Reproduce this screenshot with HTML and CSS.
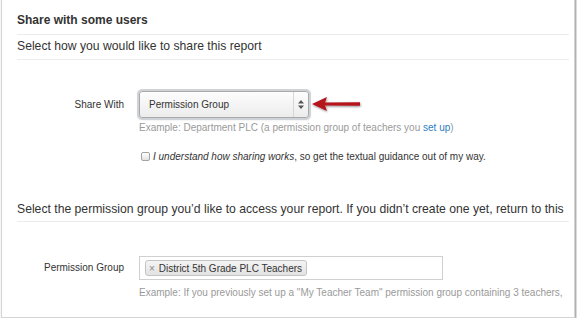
FILE: index.html
```html
<!DOCTYPE html>
<html lang="en">
<head>
    <meta charset="UTF-8">
    <title>Share report</title>
    <link rel="stylesheet" href="styles.css">
</head>
<body>
    <div class="panel">
        <h4 class="panel-title">Share with some users</h4>
        <p class="section-title">Select how you would like to share this report</p>

        <div class="form-row share-row">
            <label class="row-label">Share With</label>
            <div class="row-field">
                <div class="select-line">
                    <div class="fake-select">
                        <span class="select-value">Permission Group</span>
                        <span class="select-arrows">
                            <svg width="6" height="9" viewBox="0 0 6 9">
                                <path d="M3 0 L6 3.5 L0 3.5 Z M0 5.5 L6 5.5 L3 9 Z" fill="#555"/>
                            </svg>
                        </span>
                    </div>
                    <!-- annotation arrow -->
                    <svg class="red-arrow" width="54" height="22" viewBox="0 0 54 22">
                        <defs>
                            <filter id="sh" x="-20%" y="-40%" width="140%" height="180%">
                                <feDropShadow dx="0.5" dy="1" stdDeviation="0.8" flood-color="#000" flood-opacity="0.45"/>
                            </filter>
                        </defs>
                        <path d="M2 10 L17 3 L15 8.5 L50 8.2 L50 11.8 L15 11.5 L17 17 Z" fill="#b5121b" filter="url(#sh)"/>
                    </svg>
                </div>
                <p class="hint">Example: Department PLC (a permission group of teachers you <a href="#">set up</a>)</p>
                <label class="check-line">
                    <span class="box"></span>
                    <span><em>I understand how sharing works</em>, so get the textual guidance out of my way.</span>
                </label>
            </div>
        </div>

        <p class="section-title wide">Select the permission group you’d like to access your report. If you didn’t create one yet, return to this</p>

        <div class="form-row group-row">
            <label class="row-label">Permission Group</label>
            <div class="row-field">
                <div class="tag-input">
                    <span class="tag"><span class="tag-x">×</span>District 5th Grade PLC Teachers</span>
                </div>
                <p class="hint nowrap">Example: If you previously set up a "My Teacher Team" permission group containing 3 teachers,</p>
            </div>
        </div>
    </div>
</body>
</html>
```

FILE: styles.css
```css
* {
    box-sizing: border-box;
    margin: 0;
    padding: 0;
}

body {
    font-family: "Liberation Sans", Arial, sans-serif;
    color: #333;
    background-color: #fff;
    overflow: hidden;
}

/* Panel */
.panel {
    width: 574px;
    height: 320px;
    margin: -2px 0 0 1px;
    padding: 14px 5px 0 15px;
    border: 1px solid #d4d4d4;
    box-shadow: 1px 1px 2px rgba(0, 0, 0, 0.45);
    background-color: #fff;
    overflow: hidden;
}

.panel-title {
    font-size: 12px;
    font-weight: bold;
    line-height: 15px;
    padding-bottom: 6px;
    border-bottom: 1px solid #ececec;
}

.section-title {
    font-size: 12.2px;
    line-height: 15px;
    padding: 4px 0 5px;
    border-bottom: 1px solid #ececec;
    white-space: nowrap;
}

.section-title.wide {
    margin-top: 39px;
    padding: 1px 0 4px;
}

/* Form rows */
.form-row {
    display: grid;
    grid-template-columns: 107px 1fr;
    column-gap: 15px;
}

.share-row {
    margin-top: 31px;
}

.group-row {
    margin-top: 34px;
}

.row-label {
    font-size: 10px;
    text-align: right;
    line-height: 24px;
}

.share-row .row-label {
    line-height: 27px;
}

.row-field {
    min-width: 0;
}

.select-line {
    display: flex;
    align-items: center;
}

.fake-select {
    width: 170px;
    height: 27px;
    display: flex;
    border: 1px solid #a9a9a9;
    border-radius: 3px;
    background: linear-gradient(#fdfdfd, #ececec);
    box-shadow: 0 0 0 2px #cfd2d6, 0 1px 3px rgba(0, 0, 0, 0.25);
}

.select-value {
    flex: 1;
    font-size: 10px;
    line-height: 25px;
    padding-left: 9px;
}

.select-arrows {
    width: 15px;
    display: flex;
    align-items: center;
    justify-content: center;
    border-left: 1px solid #d6d6d6;
}

.red-arrow {
    margin-left: 1px;
    margin-top: 1px;
}

.hint {
    font-size: 10px;
    color: #9a9a9a;
    line-height: 12px;
    margin-top: 4px;
}

.hint a {
    color: #2a7fc4;
    text-decoration: none;
}

.hint.nowrap {
    white-space: nowrap;
    margin-top: 7px;
}

.check-line {
    display: flex;
    align-items: center;
    gap: 3px;
    margin-top: 17px;
    font-size: 10px;
    white-space: nowrap;
}

.check-line .box {
    width: 9px;
    height: 9px;
    margin-left: 2px;
    border: 1px solid #a3a3a3;
    border-radius: 2px;
    background: linear-gradient(#fff, #e2e2e2);
}

/* Tag input */
.tag-input {
    width: 304px;
    height: 24px;
    border: 1px solid #d0d0d0;
    padding: 3px 5px;
    display: flex;
    align-items: flex-start;
}

.tag {
    display: inline-flex;
    align-items: center;
    height: 16px;
    padding: 0 4px 0 3px;
    font-size: 10px;
    border: 1px solid #c4c4c4;
    border-radius: 3px;
    background: linear-gradient(#f4f4f4, #e3e3e3);
}

.tag-x {
    color: #888;
    font-size: 10px;
    margin-right: 4px;
}
```
